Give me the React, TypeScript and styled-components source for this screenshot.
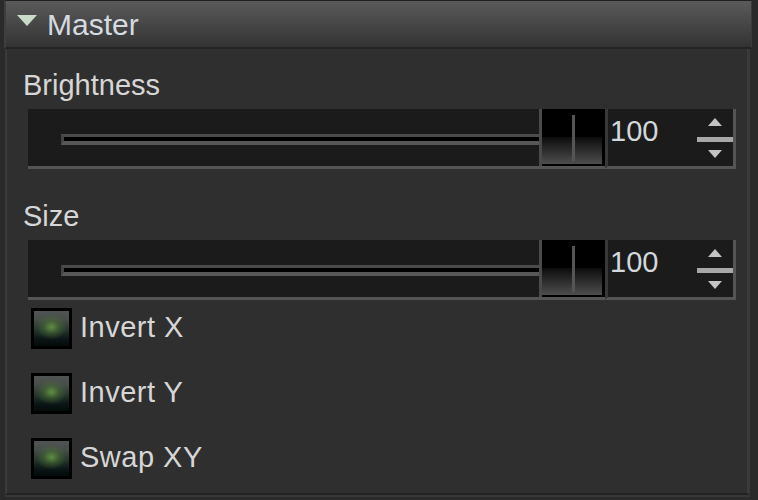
import React from "react";
import styled, { createGlobalStyle } from "styled-components";

const GlobalStyle = createGlobalStyle`
  html, body { margin: 0; padding: 0; background: #2a2a2a; }
  * { box-sizing: border-box; }
`;

const Root = styled.div`
  width: 758px;
  height: 500px;
  background: #2a2a2a;
  padding: 0 6px 0 4px;
  display: flex;
  flex-direction: column;
  font-family: "Liberation Sans", Arial, sans-serif;
  color: #d6d6d6;
  overflow: hidden;
`;

const Header = styled.div`
  height: 49px;
  flex: none;
  border-top: 1px solid #1f1f1f;
  border-left: 2px solid #3e3e3e;
  border-right: 1px solid #3a3a3a;
  border-bottom: 2px solid #232323;
  background: linear-gradient(to bottom, #5a5a5a, #333333);
  display: flex;
  align-items: flex-start;
  padding-left: 11px;
`;

const Arrow = styled.svg`
  margin-top: 14px;
  flex: none;
`;

const HeaderTitle = styled.div`
  margin-top: 7px;
  margin-left: 10px;
  font-size: 30px;
  line-height: 34px;
  color: #d4dae0;
`;

const Body = styled.div`
  height: 446px;
  flex: none;
  margin-left: 1px;
  margin-right: 2px;
  background: #2f2f2f;
  border-left: 2px solid #3a3a3a;
  border-right: 3px solid #3a3a3a;
  border-bottom: 2px solid #222222;
  box-shadow: 0 2px 0 #383838;
  padding: 19px 0 0 16px;
  display: flex;
  flex-direction: column;
`;

const Label = styled.div<{ $top: number }>`
  margin-top: ${(p) => p.$top}px;
  height: 34px;
  font-size: 29px;
  line-height: 34px;
`;

const SliderRow = styled.div`
  margin: 7px 11px 0 5px;
  height: 60px;
  display: flex;
`;

const Track = styled.div`
  flex: 1;
  height: 60px;
  background: #1b1b1b;
  border-bottom: 3px solid #555555;
  display: flex;
  padding-left: 33px;
`;

const Groove = styled.div`
  flex: 1;
  height: 11px;
  margin-top: 25px;
  background: #000;
  border-top: 3px solid #4b4b4b;
  border-left: 3px solid #444444;
  border-bottom: 4px solid #575757;
`;

const Handle = styled.div`
  width: 66px;
  height: 57px;
  border-left: 3px solid #4a4a4a;
  border-right: 3px solid #000;
  background: linear-gradient(
    to bottom,
    #000 0px,
    #000 28px,
    #0c0c0c 28px,
    #4e4e4e 55px,
    #000 55px
  );
  display: flex;
  padding: 6px 0 0 30px;
`;

const HandleLine = styled.div`
  width: 3px;
  height: 46px;
  background: #555555;
`;

const Spin = styled.div`
  width: 131px;
  height: 60px;
  background: #1b1b1b;
  border-left: 3px solid #383838;
  border-right: 3px solid #555555;
  border-bottom: 3px solid #555555;
  display: flex;
`;

const Value = styled.div`
  flex: 1;
  padding: 5px 0 0 2px;
  font-size: 29px;
  line-height: 34px;
  color: #d4d8dc;
`;

const Stepper = styled.div`
  width: 36px;
  display: flex;
  flex-direction: column;
  align-items: center;
  padding-top: 9px;
`;

const StepBar = styled.div`
  width: 36px;
  height: 5px;
  background: #a8a8a8;
  margin: 11px 0 8px;
`;

const CheckRow = styled.div<{ $top: number }>`
  margin: ${(p) => p.$top}px 0 0 8px;
  height: 41px;
  display: flex;
  align-items: flex-start;
`;

const CheckBox = styled.div`
  width: 41px;
  height: 41px;
  flex: none;
  border: 3px solid #000;
  background:
    radial-gradient(ellipse 44% 36% at 50% 46%, rgba(100, 150, 68, 0.9) 0%, rgba(74, 114, 52, 0.5) 50%, rgba(0, 0, 0, 0) 100%),
    linear-gradient(to bottom, #4f5454 0%, #474f49 24%, #24352c 55%, #0b1616 80%, #040a0a 100%);
`;

const CheckLabel = styled.div`
  margin: 2px 0 0 8px;
  font-size: 29px;
  line-height: 34px;
  letter-spacing: 0.5px;
`;

const Tri = ({ down }: { down?: boolean }) => (
  <svg width="14" height="8" viewBox="0 0 14 8">
    <polygon points={down ? "0,0 14,0 7,8" : "7,0 14,8 0,8"} fill="#c4c4c4" />
  </svg>
);

const Slider = ({ value }: { value: number }) => (
  <SliderRow>
    <Track>
      <Groove />
      <Handle>
        <HandleLine />
      </Handle>
    </Track>
    <Spin>
      <Value>{value}</Value>
      <Stepper>
        <Tri />
        <StepBar />
        <Tri down />
      </Stepper>
    </Spin>
  </SliderRow>
);

export default function App() {
  return (
    <>
      <GlobalStyle />
      <Root>
        <Header>
          <Arrow width="20" height="11" viewBox="0 0 20 11">
            <polygon points="0,0 20,0 10,11" fill="#c8dcc8" />
          </Arrow>
          <HeaderTitle>Master</HeaderTitle>
        </Header>
        <Body>
          <Label $top={0}>Brightness</Label>
          <Slider value={100} />
          <Label $top={30}>Size</Label>
          <Slider value={100} />
          <CheckRow $top={8}>
            <CheckBox />
            <CheckLabel>Invert X</CheckLabel>
          </CheckRow>
          <CheckRow $top={24}>
            <CheckBox />
            <CheckLabel>Invert Y</CheckLabel>
          </CheckRow>
          <CheckRow $top={24}>
            <CheckBox />
            <CheckLabel>Swap XY</CheckLabel>
          </CheckRow>
        </Body>
      </Root>
    </>
  );
}
